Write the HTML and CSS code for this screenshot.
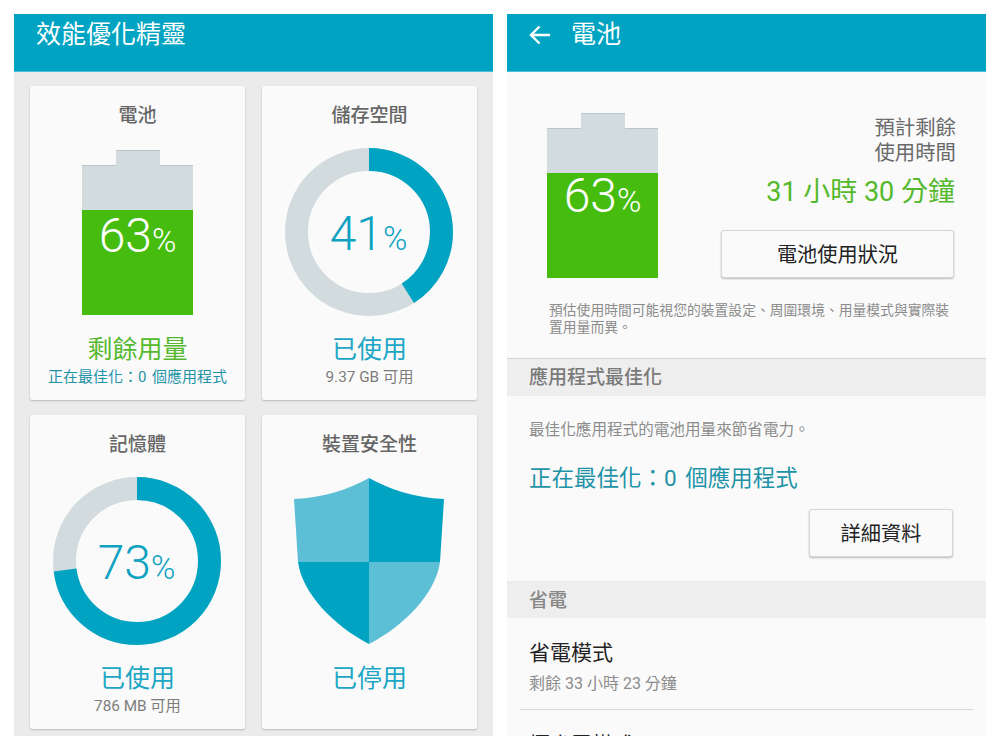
FILE: index.html
```html
<!DOCTYPE html>
<html lang="zh-Hant">
<head>
    <meta charset="UTF-8">
    <title>效能優化精靈</title>
    <link rel="stylesheet" href="styles.css">
</head>
<body>
    <div class="screens">
        <!-- Overview screen -->
        <section class="screen overview">
            <header class="appbar"><h1>效能優化精靈</h1></header>
            <div class="card-grid">
                <article class="card">
                    <h2>電池</h2>
                    <div class="gauge battery-gauge">
                        <div class="battery">
                            <div class="battery-cap"></div>
                            <div class="battery-empty"></div>
                            <div class="battery-fill"><span class="battery-pct">63<small>%</small></span></div>
                        </div>
                    </div>
                    <p class="state green">剩餘用量</p>
                    <p class="sub teal">正在最佳化：0 個應用程式</p>
                </article>
                <article class="card">
                    <h2>儲存空間</h2>
                    <div class="gauge">
                        <svg class="ring" viewBox="0 0 170 170">
                            <circle class="ring-bg" cx="85" cy="85" r="72.5"></circle>
                            <circle class="ring-val" cx="85" cy="85" r="72.5" pathLength="100" stroke-dasharray="41 100" transform="rotate(-90 85 85)"></circle>
                        </svg>
                        <span class="ring-pct">41<small>%</small></span>
                    </div>
                    <p class="state blue">已使用</p>
                    <p class="sub">9.37 GB 可用</p>
                </article>
                <article class="card">
                    <h2>記憶體</h2>
                    <div class="gauge">
                        <svg class="ring" viewBox="0 0 170 170">
                            <circle class="ring-bg" cx="85" cy="85" r="72.5"></circle>
                            <circle class="ring-val" cx="85" cy="85" r="72.5" pathLength="100" stroke-dasharray="73 100" transform="rotate(-90 85 85)"></circle>
                        </svg>
                        <span class="ring-pct">73<small>%</small></span>
                    </div>
                    <p class="state blue">已使用</p>
                    <p class="sub">786 MB 可用</p>
                </article>
                <article class="card">
                    <h2>裝置安全性</h2>
                    <div class="gauge">
                        <svg class="shield" viewBox="0 0 150 166">
                            <path fill="#5dbfd6" d="M75 0C55 11 30 20 0 21L4 84H75Z"></path>
                            <path fill="#00a4c2" d="M75 0C95 11 120 20 150 21L146 84H75Z"></path>
                            <path fill="#00a4c2" d="M4 84C8 115 40 148 75 166V84Z"></path>
                            <path fill="#5dbfd6" d="M146 84C142 115 110 148 75 166V84Z"></path>
                        </svg>
                    </div>
                    <p class="state blue">已停用</p>
                </article>
            </div>
        </section>

        <!-- Battery detail screen -->
        <section class="screen detail">
            <header class="appbar">
                <svg class="back" viewBox="0 0 22 20">
                    <path d="M21 10H2M10.500 1.500L2 10l8.500 8.500"></path>
                </svg>
                <h1>電池</h1>
            </header>
            <div class="summary">
                <div class="battery">
                    <div class="battery-cap"></div>
                    <div class="battery-empty"></div>
                    <div class="battery-fill"><span class="battery-pct">63<small>%</small></span></div>
                </div>
                <div class="summary-info">
                    <p class="remain-label">預計剩餘<br>使用時間</p>
                    <p class="remain-time">31 小時 30 分鐘</p>
                    <button class="btn btn-wide">電池使用狀況</button>
                </div>
            </div>
            <p class="note">預估使用時間可能視您的裝置設定、周圍環境、用量模式與實際裝置用量而異。</p>

            <h3 class="section-head first">應用程式最佳化</h3>
            <div class="optimize">
                <p class="optimize-desc">最佳化應用程式的電池用量來節省電力。</p>
                <p class="optimize-state">正在最佳化：0 個應用程式</p>
                <div class="btn-row"><button class="btn btn-small">詳細資料</button></div>
            </div>

            <h3 class="section-head">省電</h3>
            <div class="row">
                <p class="row-title">省電模式</p>
                <p class="row-sub">剩餘 33 小時 23 分鐘</p>
            </div>
            <div class="row">
                <p class="row-title">極省電模式</p>
            </div>
        </section>
    </div>
</body>
</html>
```

FILE: styles.css
```css
/* Base */
* {
    margin: 0;
    padding: 0;
    box-sizing: border-box;
}

body {
    background: #fff;
    font-family: 'Roboto', 'Noto Sans CJK TC', sans-serif;
    color: #333;
    text-spacing-trim: space-all;
}

.screens {
    display: flex;
    gap: 14px;
    padding: 14px;
}

.screen {
    width: 479px;
    height: 722px;
    overflow: hidden;
}

.overview {
    background: #ebebeb;
}

.detail {
    background: #fafafa;
}

/* App bar */
.appbar {
    display: flex;
    align-items: flex-start;
    height: 58px;
    padding: 4px 22px 0;
    background: #00a4c2;
    border-bottom: 1px solid #4dc0d6;
    color: #fff;
}

.appbar h1 {
    font-size: 25px;
    font-weight: 400;
    line-height: 34px;
}

.back {
    width: 22px;
    height: 20px;
    margin: 7px 20px 0 0;
    fill: none;
    stroke: #fff;
    stroke-width: 2.400;
}

/* Overview cards */
.card-grid {
    display: grid;
    grid-template-columns: 215px 215px;
    grid-auto-rows: 314px;
    gap: 15px 17px;
    padding: 14px 16px;
}

.card {
    display: flex;
    flex-direction: column;
    align-items: center;
    background: #fafafa;
    border-radius: 2px;
    box-shadow: 0 1px 2px rgba(0,0,0,0.22);
}

.card h2 {
    height: 28px;
    margin-top: 16px;
    font-size: 19px;
    font-weight: 500;
    line-height: 28px;
    color: #666;
}

.gauge {
    position: relative;
    display: flex;
    align-items: center;
    justify-content: center;
    width: 170px;
    height: 170px;
    margin: 17px 2px 0 0;
}

.battery-gauge {
    margin: 20px 0 2px;
    height: 165px;
}

/* Battery */
.battery {
    display: flex;
    flex-direction: column;
    align-items: center;
    width: 111px;
    height: 165px;
}

.battery-cap {
    position: relative;
    width: 44px;
    height: 16px;
    margin-bottom: -1px;
    background: #d2dcde;
    border-top: 1px solid #bcc6c8;
}

.battery-empty {
    width: 100%;
    height: 45px;
    background: #d2dcde;
    border-top: 1px solid #bcc6c8;
}

.battery-fill {
    width: 100%;
    height: 105px;
    background: #46bd0e;
    text-align: center;
}

.battery-pct {
    font-size: 48px;
    font-weight: 300;
    line-height: 52px;
    color: #fff;
}

.summary .battery-pct {
    line-height: 46px;
}

.battery-pct small,
.ring-pct small {
    font-size: 33px;
}

/* Rings */
.ring {
    width: 170px;
    height: 170px;
}

.ring-bg,
.ring-val {
    fill: none;
    stroke-width: 23;
}

.ring-bg {
    stroke: #d2dcde;
}

.ring-val {
    stroke: #00a4c2;
}

.ring-pct {
    position: absolute;
    top: 60px;
    left: 0;
    right: 0;
    text-align: center;
    font-size: 48px;
    font-weight: 300;
    line-height: 54px;
    color: #0ea2c1;
}

.shield {
    width: 150px;
    height: 166px;
}

/* Card captions */
.state {
    margin-top: 15px;
    font-size: 25px;
    line-height: 36px;
}

.green {
    color: #55b92d;
}

.blue {
    color: #1aa6c4;
}

.sub {
    font-size: 15.300px;
    line-height: 19px;
    color: #7d7d7d;
}

.sub.teal {
    font-size: 15px;
    word-spacing: 2px;
    color: #1e93a8;
}

/* Battery detail */
.summary {
    display: flex;
    justify-content: space-between;
    padding: 41px 32px 0 40px;
}

.summary-info {
    display: flex;
    flex-direction: column;
    align-items: flex-end;
    padding-top: 3px;
}

.remain-label {
    margin-right: -2px;
    font-size: 20.400px;
    line-height: 25px;
    text-align: right;
    color: #6a6a6a;
}

.remain-time {
    margin: 8px -1px 0 0;
    font-size: 27px;
    line-height: 36px;
    color: #55b92d;
}

.btn {
    padding-bottom: 2px;
    background: #fafafa;
    border: 1px solid #d6d6d6;
    border-radius: 3px;
    box-shadow: 0 1px 2px rgba(0,0,0,0.25);
    font-family: inherit;
    font-size: 20.200px;
    color: #222;
}

.btn-wide {
    width: 233px;
    height: 48px;
    margin-top: 20px;
}

.btn-small {
    width: 144px;
    height: 48px;
}

.note {
    padding: 24px 36px 0 42px;
    font-size: 13.800px;
    line-height: 17px;
    color: #8c8c8c;
}

.section-head {
    height: 37px;
    padding-left: 22px;
    background: #eeeeee;
    font-size: 19px;
    font-weight: 500;
    line-height: 39px;
    color: #868686;
}

.section-head.first {
    margin-top: 22px;
    height: 38px;
    border-top: 1px solid #d4d4d4;
    line-height: 38px;
    color: #7a7a7a;
}

.optimize {
    height: 185px;
    padding: 23px 33px 0 22px;
}

.optimize-desc {
    font-size: 15.600px;
    line-height: 22px;
    color: #8c8c8c;
}

.optimize-state {
    margin-top: 21px;
    font-size: 22.500px;
    word-spacing: 3px;
    line-height: 32px;
    color: #1e93a8;
}

.btn-row {
    display: flex;
    justify-content: flex-end;
    margin-top: 15px;
}

.row {
    margin: 0 13px;
    padding: 20px 9px 0;
    height: 92px;
    border-bottom: 1px solid #d8d8d8;
}

.row-title {
    font-size: 21px;
    line-height: 30px;
    color: #222;
}

.row-sub {
    margin-top: 4px;
    font-size: 16px;
    line-height: 24px;
    color: #8c8c8c;
}
```
